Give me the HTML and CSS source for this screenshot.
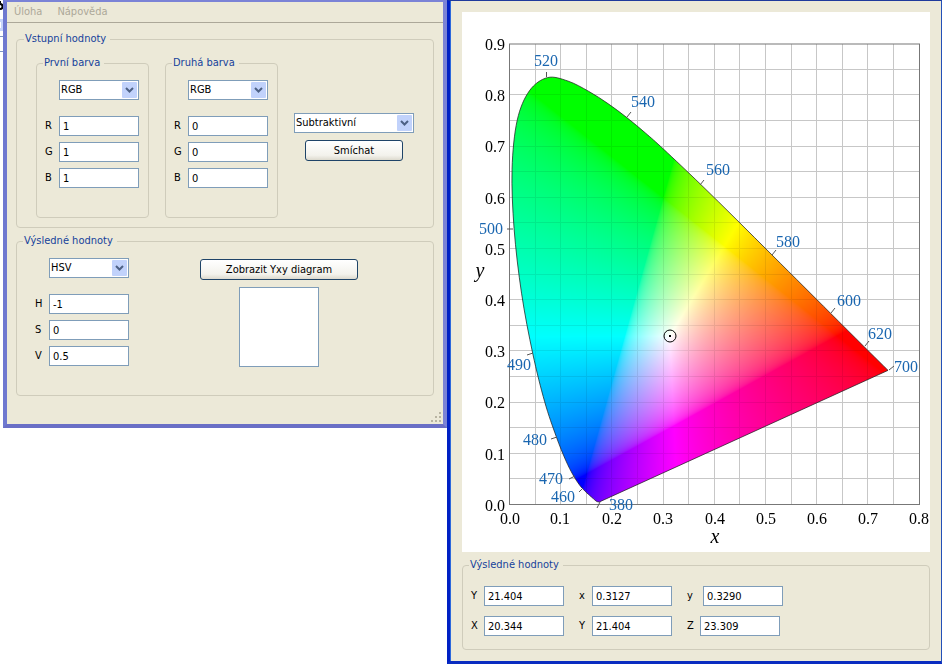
FILE: index.html
```html
<!DOCTYPE html>
<html lang="cs">
<head>
<meta charset="utf-8">
<title>Míchání barev</title>
<link rel="stylesheet" href="styles.css">
</head>
<body>
<div class="desktop">
  <div class="behind" aria-hidden="true">
    <svg width="3" height="60" viewBox="0 0 3 60">
      <path d="M0 2h1M0 4a2.500 2.500 0 0 1 0 5" fill="none" stroke="#000" stroke-width="2"/>
      <path d="M0 19h3v12H0z" fill="#c6d3fb"/>
      <path d="M0 22h1v6H0z" fill="#fff"/>
      <path d="M0 36.500h3M0 51.500h3" stroke="#7b93c4"/>
    </svg>
  </div>

  <main class="window window-main">
    <nav class="menu">
      <button class="menu-item" disabled>Úloha</button>
      <button class="menu-item" disabled>Nápověda</button>
    </nav>
    <div class="main-content">
      <fieldset class="group inputs">
        <legend>Vstupní hodnoty</legend>
        <fieldset class="group colour">
          <legend>První barva</legend>
          <div class="combo">
            <select aria-label="Model první barvy"><option>RGB</option></select>
            <svg class="arrow" viewBox="0 0 15 16"><rect width="15" height="16" rx="1"/><path d="M4 6l3.500 3.500L11 6"/></svg>
          </div>
          <div class="fields">
            <label for="r1">R</label><input id="r1" value="1">
            <label for="g1">G</label><input id="g1" value="1">
            <label for="b1">B</label><input id="b1" value="1">
          </div>
        </fieldset>
        <fieldset class="group colour">
          <legend>Druhá barva</legend>
          <div class="combo">
            <select aria-label="Model druhé barvy"><option>RGB</option></select>
            <svg class="arrow" viewBox="0 0 15 16"><rect width="15" height="16" rx="1"/><path d="M4 6l3.500 3.500L11 6"/></svg>
          </div>
          <div class="fields">
            <label for="r2">R</label><input id="r2" value="0">
            <label for="g2">G</label><input id="g2" value="0">
            <label for="b2">B</label><input id="b2" value="0">
          </div>
        </fieldset>
        <div class="mixing">
          <div class="combo combo-wide">
            <select aria-label="Způsob míchání"><option>Subtraktivní</option></select>
            <svg class="arrow" viewBox="0 0 15 16"><rect width="15" height="16" rx="1"/><path d="M4 6l3.500 3.500L11 6"/></svg>
          </div>
          <button class="push push-mix">Smíchat</button>
        </div>
      </fieldset>

      <fieldset class="group result">
        <legend>Výsledné hodnoty</legend>
        <div class="result-values">
          <div class="combo">
            <select aria-label="Model výsledné barvy"><option>HSV</option></select>
            <svg class="arrow" viewBox="0 0 15 16"><rect width="15" height="16" rx="1"/><path d="M4 6l3.500 3.500L11 6"/></svg>
          </div>
          <div class="fields">
            <label for="h">H</label><input id="h" value="-1">
            <label for="s">S</label><input id="s" value="0">
            <label for="v">V</label><input id="v" value="0.5">
          </div>
        </div>
        <div class="preview">
          <button class="push push-diagram">Zobrazit Yxy diagram</button>
          <div class="swatch"></div>
        </div>
      </fieldset>
    </div>
    <svg class="grip" viewBox="0 0 12 12"><path d="M9 1h2v2H9zM5 5h2v2H5zM9 5h2v2H9zM1 9h2v2H1zM5 9h2v2H5zM9 9h2v2H9z"/></svg>
  </main>

  <section class="window window-diagram">
    <div class="chart">
      <canvas class="gamut" width="936" height="1080"></canvas>
      <svg class="axes" viewBox="0 0 468 540">
        <rect class="frame" x="47.500" y="32" width="410" height="460.500"/>
        <path class="locus" id="locus"/>
        <path class="marks" d="M84.500 65v-5M165 105l4-5M238 173l4-5M310 243l4-5M369 301l4-5M403 334l4-5M427 358l5-4M51 217h-6M71 341l-6 2M95 425l-6 2M113 464l-6 3M121 476l-4 4M138 490l-3 6"/>
        <g class="waves">
          <text x="72" y="54">520</text>
          <text x="169" y="95">540</text>
          <text x="244" y="163">560</text>
          <text x="314" y="235">580</text>
          <text x="375" y="294">600</text>
          <text x="406" y="327">620</text>
          <text x="432" y="360">700</text>
          <text x="17" y="222">500</text>
          <text x="45" y="358">490</text>
          <text x="61" y="433">480</text>
          <text x="77" y="472">470</text>
          <text x="89" y="490">460</text>
          <text x="147" y="498">380</text>
        </g>
        <g class="scale scale-y">
          <text x="43" y="38">0.9</text>
          <text x="43" y="89">0.8</text>
          <text x="43" y="140">0.7</text>
          <text x="43" y="192">0.6</text>
          <text x="43" y="243">0.5</text>
          <text x="43" y="294">0.4</text>
          <text x="43" y="345">0.3</text>
          <text x="43" y="396">0.2</text>
          <text x="43" y="448">0.1</text>
          <text x="43" y="499">0.0</text>
        </g>
        <g class="scale scale-x">
          <text x="48" y="512">0.0</text>
          <text x="98" y="512">0.1</text>
          <text x="150" y="512">0.2</text>
          <text x="201" y="512">0.3</text>
          <text x="253" y="512">0.4</text>
          <text x="304" y="512">0.5</text>
          <text x="355" y="512">0.6</text>
          <text x="406" y="512">0.7</text>
          <text x="457" y="512">0.8</text>
        </g>
        <text class="axis-name" x="18" y="265">y</text>
        <text class="axis-name" x="253" y="531">x</text>
        <circle class="pointer" cx="208" cy="324" r="6"/>
        <rect x="207" y="323" width="2" height="2"/>
      </svg>
    </div>

    <fieldset class="group readout">
      <legend>Výsledné hodnoty</legend>
      <div class="row">
        <div class="pair"><label for="yy">Y</label><input id="yy" value="21.404"></div>
        <div class="pair"><label for="cx">x</label><input id="cx" value="0.3127"></div>
        <div class="pair pair-wide"><label for="cy">y</label><input id="cy" value="0.3290"></div>
      </div>
      <div class="row">
        <div class="pair"><label for="tx">X</label><input id="tx" value="20.344"></div>
        <div class="pair"><label for="ty">Y</label><input id="ty" value="21.404"></div>
        <div class="pair"><label for="tz">Z</label><input id="tz" value="23.309"></div>
      </div>
    </fieldset>
  </section>
</div>
<script src="diagram.js"></script>
</body>
</html>
```

FILE: styles.css
```css
* {
  box-sizing: border-box;
}

body {
  margin: 0;
  background: #fff;
  color: #000;
  font: 11px/14px "DejaVu Sans Condensed", "DejaVu Sans", sans-serif;
}

input,
select,
button {
  margin: 0;
  color: inherit;
  font: inherit;
}

.desktop {
  display: grid;
  grid-template-columns: 3px 444fr 495fr;
  min-height: 100vh;
}

.behind svg {
  display: block;
}

.window {
  background: #ece9d8;
}

.window-main {
  position: relative;
  align-self: start;
  padding-bottom: 28px;
  border: 4px solid #7b83d6;
  border-top-width: 2px;
  border-left-color: #6f79d0;
  border-bottom-color: #6a6fc6;
}

.window-diagram {
  padding: 11px 11px 11px 12px;
  border: 3px solid #0a2cc0;
  border-top: 1px solid #1f3a9c;
  border-right: 1px solid #2450b8;
  border-left: 3px solid #0020c4;
  box-shadow: inset 1px 0 #2c68dc;
}

.menu {
  display: flex;
  gap: 15px;
  height: 21px;
  padding-left: 7px;
  border-bottom: 1px solid #aca899;
}

.menu-item {
  padding: 0;
  border: 0;
  background: none;
  color: #aca899;
}

.main-content {
  display: grid;
  gap: 6px;
  padding: 9px 9px 0;
}

.group {
  min-width: 0;
  margin: 0;
  padding: 10px 9px;
  border: 1px solid #cfccbb;
  border-radius: 4px;
}

.group > legend {
  margin-left: -2px;
  padding: 0 4px 0 1px;
  color: #16429b;
}

.inputs {
  display: grid;
  grid-template-columns: 113px 113px 120px;
  gap: 16px;
  padding: 10px 19px 9px;
}

.inputs > legend,
.result > legend {
  margin-left: -12px;
}

.colour {
  padding: 10px 9px 29px 8px;
}

.fields {
  display: grid;
  grid-template-columns: 14px 80px;
  row-gap: 6px;
  align-items: center;
  justify-content: end;
  margin-top: 16px;
}

input {
  width: 80px;
  height: 20px;
  padding: 0 3px;
  border: 1px solid #7f9db9;
  border-radius: 0;
  background: #fff;
}

.combo {
  position: relative;
  width: 80px;
  margin-left: auto;
}

.combo-wide {
  width: 120px;
}

.combo select {
  display: block;
  width: 100%;
  height: 20px;
  padding: 0 18px 0 1px;
  border: 1px solid #7f9db9;
  border-radius: 0;
  background: #fff;
  appearance: none;
}

.arrow {
  position: absolute;
  top: 2px;
  right: 2px;
  width: 15px;
  height: 16px;
  pointer-events: none;
}

.arrow rect {
  fill: #c1d2fb;
}

.arrow path {
  fill: none;
  stroke: #4d6185;
  stroke-width: 2;
}

.mixing {
  display: grid;
  gap: 7px;
  align-content: start;
  justify-items: center;
  padding-top: 57px;
}

.push {
  height: 21px;
  padding: 0;
  border: 1px solid #1f4468;
  border-radius: 3px;
  background: linear-gradient(#fff, #f3f2ec 75%, #dddace);
}

.push-mix {
  width: 98px;
}

.push-diagram {
  width: 158px;
}

.result {
  display: flex;
  gap: 71px;
  padding: 10px 18px 28px;
}

.preview {
  display: grid;
  gap: 7px;
  align-content: start;
  justify-items: center;
  padding-top: 1px;
}

.swatch {
  width: 80px;
  height: 80px;
  border: 1px solid #7f9db9;
  background: #fff;
}

.grip {
  position: absolute;
  right: 1px;
  bottom: 1px;
  width: 12px;
  height: 12px;
  fill: #b8b4a2;
}

.chart {
  position: relative;
  background: #fff;
}

.gamut {
  position: absolute;
  inset: 0;
  width: 100%;
  height: 100%;
}

.axes {
  position: relative;
  display: block;
  width: 100%;
  font: 16px "Liberation Serif", serif;
}

.frame {
  fill: none;
  stroke: #777;
}

.locus {
  fill: none;
  stroke: #222;
  stroke-opacity: 0.75;
}

.marks {
  fill: none;
  stroke: #555;
}

.waves {
  fill: #1a66b0;
}

.scale-y {
  text-anchor: end;
}

.scale-x {
  text-anchor: middle;
}

.axis-name {
  font-size: 20px;
  font-style: italic;
  text-anchor: middle;
}

.pointer {
  fill: none;
  stroke: #000;
}

.readout {
  display: grid;
  gap: 10px;
  margin-top: 6px;
  padding: 14px 8px 13px;
}

.row {
  display: flex;
  gap: 15px;
}

.pair {
  display: grid;
  grid-template-columns: 13px 80px;
  align-items: center;
}

.pair-wide {
  grid-template-columns: 16px 80px;
}
```

FILE: diagram.js
```js
// Chromaticity coordinates of the spectral locus, from 380 to 700 nm.
const spectrum = [
  [0.1755, 0.0050], [0.1725, 0.0052], [0.1689, 0.0069], [0.1644, 0.0109],
  [0.1566, 0.0177], [0.1510, 0.0227], [0.1440, 0.0297], [0.1355, 0.0399],
  [0.1241, 0.0578], [0.1096, 0.0868], [0.0913, 0.1327], [0.0687, 0.2007],
  [0.0454, 0.2950], [0.0235, 0.4127], [0.0090, 0.5384], [0.0050, 0.6548],
  [0.0150, 0.7502], [0.0389, 0.8080], [0.0743, 0.8338], [0.1142, 0.8270],
  [0.1547, 0.8069], [0.1929, 0.7826], [0.2296, 0.7553], [0.2658, 0.7253],
  [0.3016, 0.6933], [0.3731, 0.6255], [0.4441, 0.5557], [0.5125, 0.4876],
  [0.5752, 0.4252], [0.6270, 0.3735], [0.6915, 0.3093], [0.7393, 0.2620]
];

const originX = 47.5;
const originY = 492.5;
const unit = 512;

const points = spectrum.map(([x, y]) => [originX + x * unit, originY - y * unit]);

// Smooth curve through the points (Catmull-Rom as cubic Béziers).
let outline = `M${points[0]}`;
for (let i = 0; i < points.length - 1; i++) {
  const a = points[Math.max(i - 1, 0)];
  const b = points[i];
  const c = points[i + 1];
  const d = points[Math.min(i + 2, points.length - 1)];
  const c1 = [b[0] + (c[0] - a[0]) / 6, b[1] + (c[1] - a[1]) / 6];
  const c2 = [c[0] - (d[0] - b[0]) / 6, c[1] - (d[1] - b[1]) / 6];
  outline += `C${c1} ${c2} ${c}`;
}
outline += "Z";
document.getElementById("locus").setAttribute("d", outline);

// Grid lines every 0.05.
let grid = "";
for (let i = 1; i < 16; i++) {
  grid += `M${Math.floor(originX + i * 25.6) + 0.5} 32V492.5`;
}
for (let i = 1; i < 18; i++) {
  grid += `M47.5 ${Math.floor(originY - i * 25.6) + 0.5}H457.5`;
}

// The brightest sRGB colour of each chromaticity.
const canvas = document.querySelector(".gamut");
const scale = canvas.width / 468;
const gamma = v => (v <= 0.0031308 ? 12.92 * v : 1.055 * v ** (1 / 2.4) - 0.055);

const layer = document.createElement("canvas");
layer.width = canvas.width;
layer.height = canvas.height;
const layerContext = layer.getContext("2d");
const image = layerContext.createImageData(layer.width, layer.height);
for (let py = 0; py < layer.height; py++) {
  for (let px = 0; px < layer.width; px++) {
    const x = (px / scale - originX) / unit;
    const y = (originY - py / scale) / unit;
    const z = 1 - x - y;
    const rgb = [
      3.2406 * x - 1.5372 * y - 0.4986 * z,
      -0.9689 * x + 1.8758 * y + 0.0415 * z,
      0.0557 * x - 0.2040 * y + 1.0570 * z
    ].map(v => Math.max(v, 0));
    const peak = Math.max(...rgb) || 1;
    const at = (py * layer.width + px) * 4;
    rgb.forEach((v, k) => { image.data[at + k] = 255 * gamma(v / peak); });
    image.data[at + 3] = 255;
  }
}
layerContext.putImageData(image, 0, 0);

// The grid shows fully on the white ground and faintly over the gamut.
const context = canvas.getContext("2d");
const gridPath = new Path2D(grid);
context.scale(scale, scale);
context.strokeStyle = "rgba(0, 0, 0, 0.22)";
context.stroke(gridPath);
context.clip(new Path2D(outline));
context.drawImage(layer, 0, 0, 468, 540);
context.strokeStyle = "rgba(0, 0, 0, 0.08)";
context.stroke(gridPath);
```
